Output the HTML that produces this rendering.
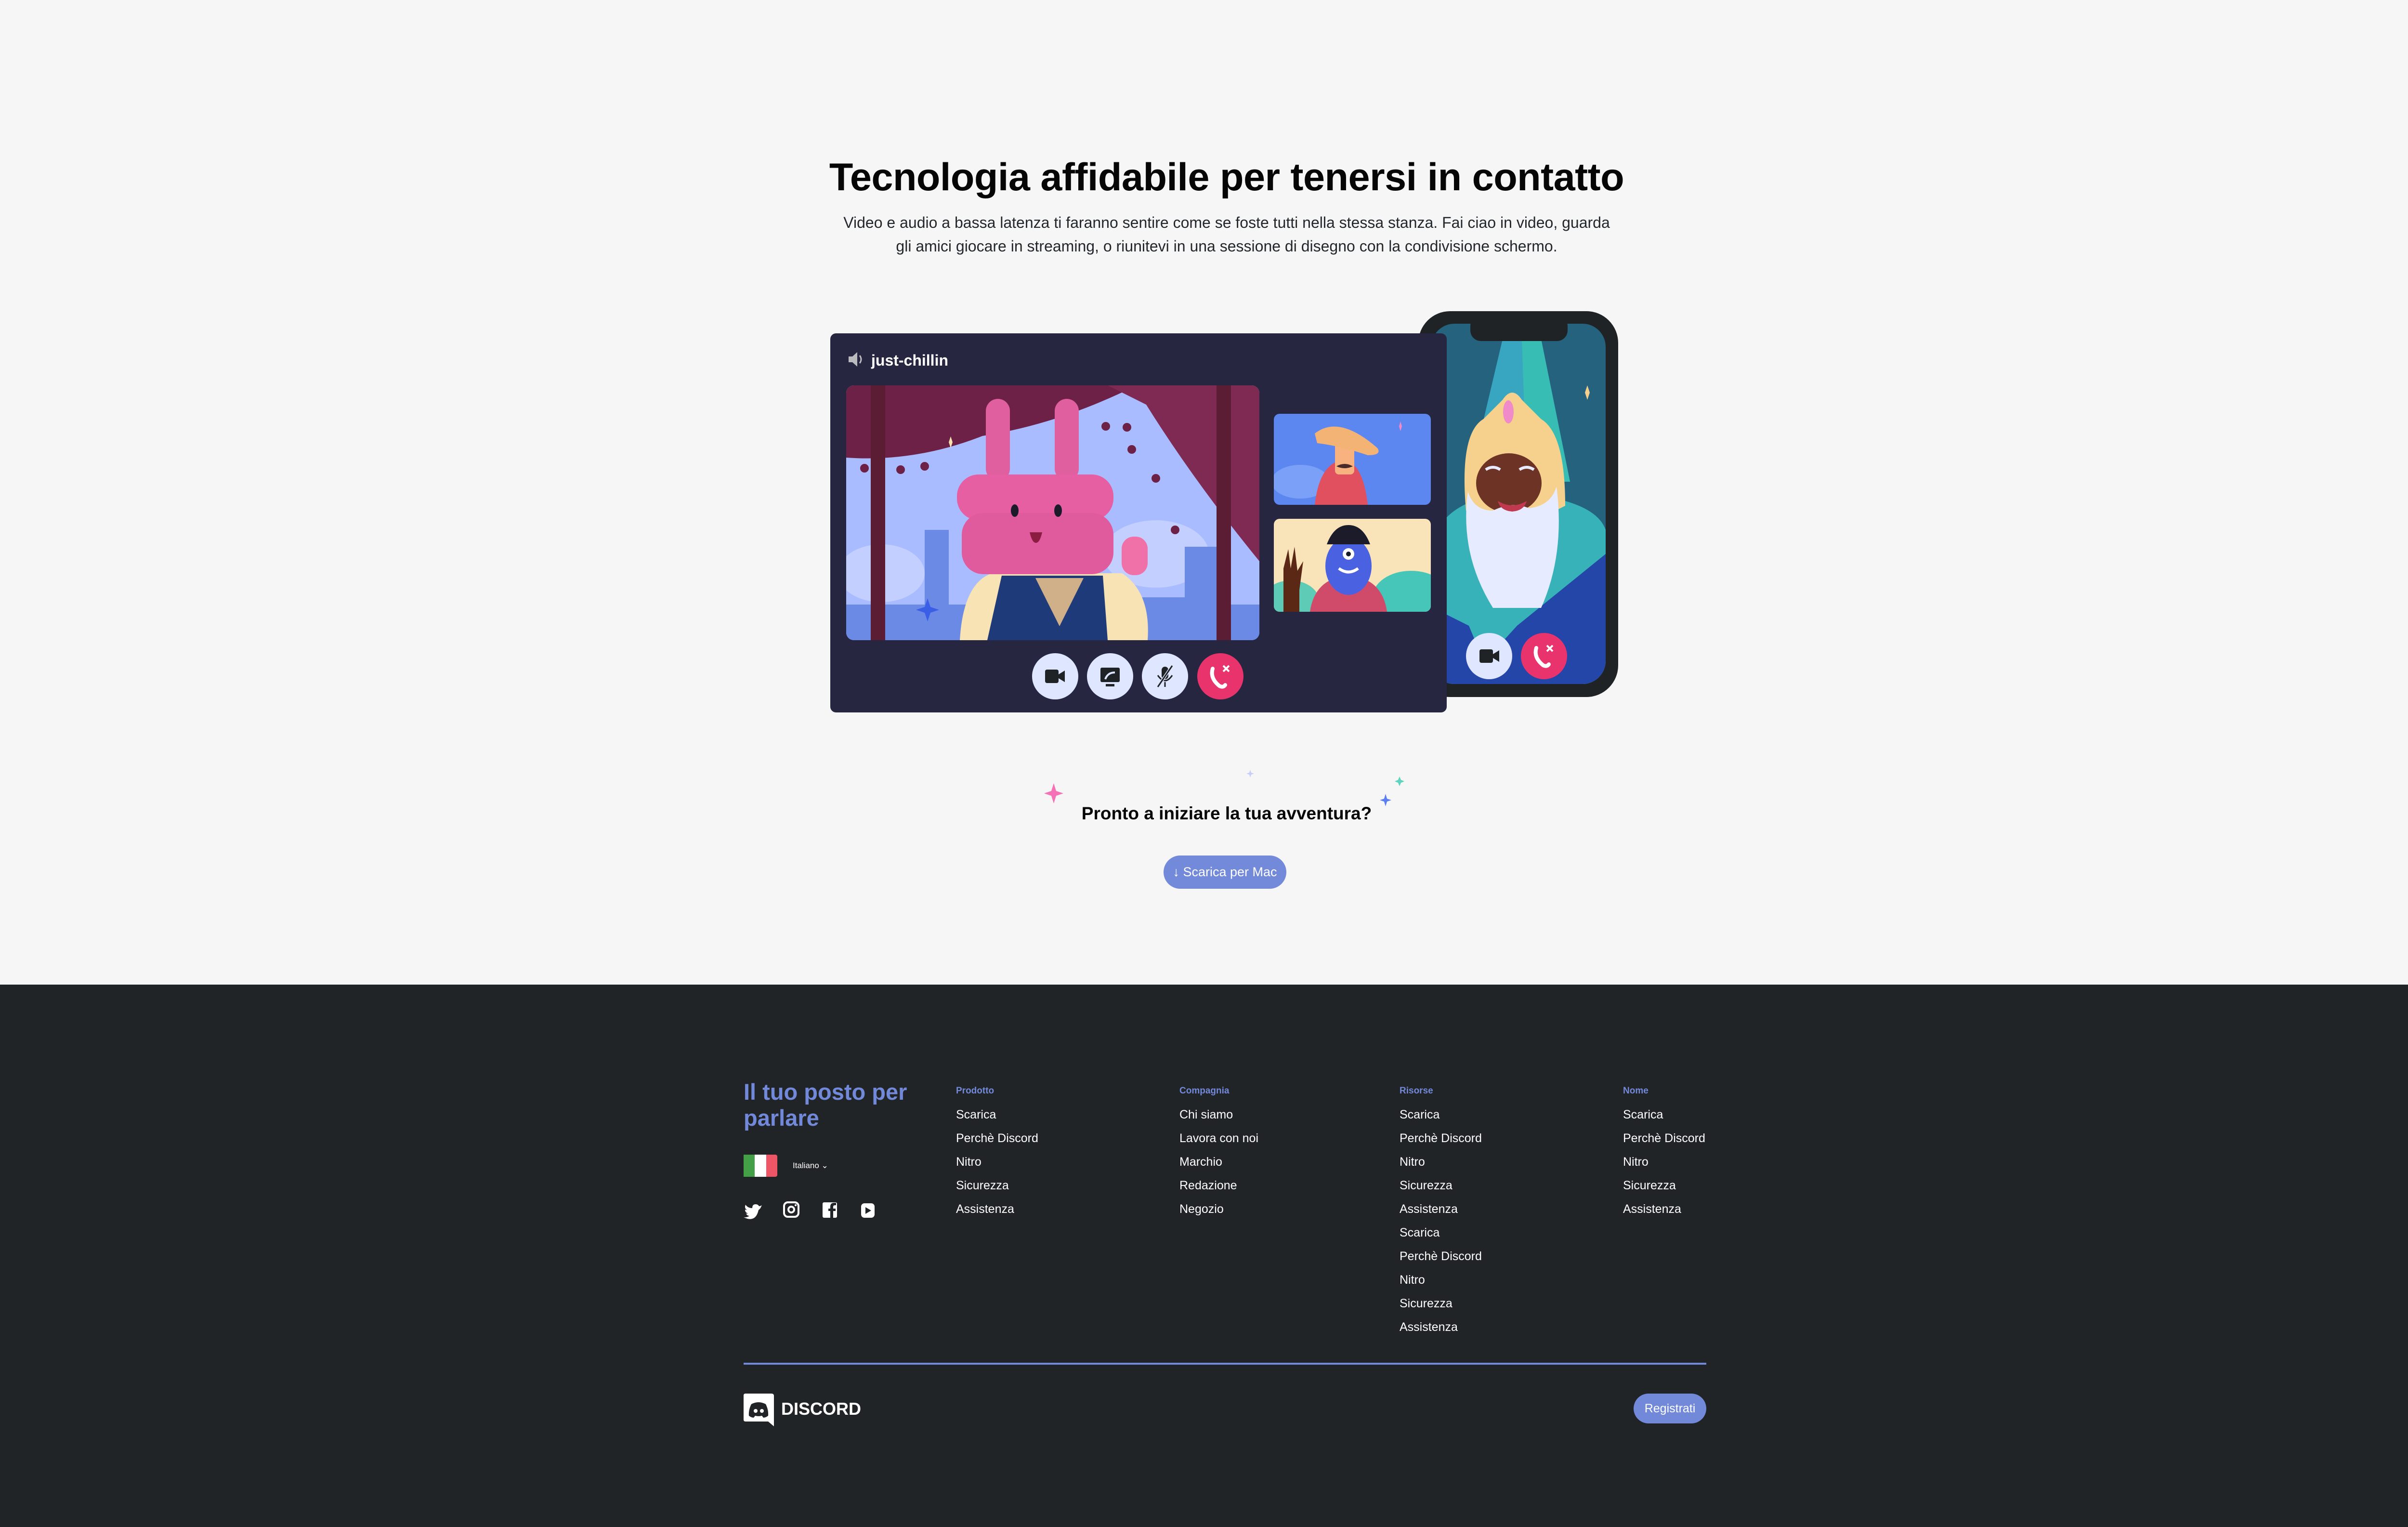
<!DOCTYPE html>
<html><head><meta charset="utf-8"><style>
*{margin:0;padding:0;box-sizing:border-box}
html,body{width:5120px;height:3170px;overflow:hidden}
body{background:#f6f6f6;font-family:"Liberation Sans",Arial,sans-serif;position:relative}
.abs{position:absolute}
h1{position:absolute;left:0;width:5094px;top:322px;text-align:center;font-size:81px;font-weight:bold;color:#060607;letter-spacing:-0.5px}
.sub{position:absolute;left:0;width:5094px;top:438px;text-align:center;font-size:32px;line-height:49px;color:#23262a}
.cta{position:absolute;left:0;width:5094px;top:1668px;text-align:center;font-size:37px;font-weight:bold;color:#060607}
.btn{position:absolute;left:2416px;top:1776px;width:255px;height:69px;border-radius:35px;background:#7389d9;color:#fff;font-size:27px;line-height:69px;text-align:center}
footer{position:absolute;left:0;top:2044px;width:5094px;height:1126px;background:#212427}
.scroll{position:absolute;left:5094px;top:0;width:26px;height:3170px;background:#f1f1f1;border-left:1px solid #e4e4e4}
.thumb{position:absolute;left:5099px;top:2044px;width:14px;height:1126px;background:#8a8a8a;border-radius:7px}
.tag{position:absolute;left:1544px;top:2240px;font-size:47px;line-height:54px;font-weight:bold;color:#7289da}
.col{position:absolute;top:2254px}
.col h4{font-size:19px;color:#7289da;font-weight:bold;height:46px}
.col div{font-size:25px;color:#fff;height:49px}
</style></head><body>
<h1>Tecnologia affidabile per tenersi in contatto</h1>
<div class="sub">Video e audio a bassa latenza ti faranno sentire come se foste tutti nella stessa stanza. Fai ciao in video, guarda<br>gli amici giocare in streaming, o riunitevi in una sessione di disegno con la condivisione schermo.</div>

<svg class="abs" style="left:1700px;top:620px" width="1700" height="880" viewBox="1700 620 1700 880">
<defs>
<clipPath id="mv"><rect x="1757" y="800" width="858" height="529" rx="16"/></clipPath>
<clipPath id="s1"><rect x="2645" y="859" width="326" height="189" rx="12"/></clipPath>
<clipPath id="s2"><rect x="2645" y="1077" width="326" height="193" rx="12"/></clipPath>
<clipPath id="ph"><rect x="2972" y="672" width="362" height="748" rx="48"/></clipPath>
</defs>
<!-- phone -->
<rect x="2945" y="646" width="415" height="801" rx="66" fill="#202326"/>
<g clip-path="url(#ph)">
<rect x="2972" y="672" width="362" height="748" fill="#25627d"/>
<polygon points="3050,1000 3120,704 3200,704 3260,1000" fill="#38a6c0"/>
<polygon points="3160,704 3200,704 3260,1000 3170,1000" fill="#38bdb5"/>
<path d="M2972 1120 Q3000 1060 3060 1040 L3250 1040 Q3320 1060 3334 1100 L3334 1420 L2972 1420Z" fill="#36b2b8"/>
<path d="M3150 1299 L3334 1150 L3334 1420 L3040 1420 Z" fill="#2346a8"/>
<path d="M2972 1260 L3050 1299 L3100 1420 L2972 1420Z" fill="#2346a8"/>
<path d="M3044 1060 Q3030 900 3080 870 L3120 830 Q3140 800 3160 830 L3200 870 Q3250 900 3250 1050 L3230 1060 L3060 1060Z" fill="#f5d18d"/>
<ellipse cx="3133" cy="1003" rx="68" ry="62" fill="#6d3426"/>
<path d="M3048 1020 Q3060 1060 3100 1060 Q3140 1040 3175 1055 Q3220 1050 3232 1010 Q3250 1150 3200 1262 L3100 1262 Q3030 1150 3048 1020Z" fill="#e7ebff"/>
<path d="M3110 1040 q30 18 60 0 q-5 20 -30 22 q-25 -2 -30 -22z" fill="#c0394e"/>
<path d="M3085 975 q15 -10 30 0 M3155 975 q15 -10 30 0" stroke="#e7ebff" stroke-width="6" fill="none"/>
<ellipse cx="3132" cy="855" rx="11" ry="24" fill="#f08ac8"/>
<path d="M3291 815 l5 -15 l5 15 l-5 15z" fill="#f5d18d"/>
<path d="M2990 1045 l4 -10 l4 10 l-4 10z" fill="#f08ac8"/>
</g>
<rect x="3053" y="655" width="202" height="53" rx="22" fill="#202326"/>
<circle cx="3092" cy="1362" r="48" fill="#dfe6ff"/>
<rect x="3072" y="1348" width="28" height="28" rx="4" fill="#202326"/><polygon points="3100,1358 3113,1350 3113,1374 3100,1366" fill="#202326"/>
<circle cx="3206" cy="1362" r="48" fill="#e8336d"/>
<path d="M3190 1345 q-6 20 14 36 q8 4 12 -2" stroke="#fff" stroke-width="8" fill="none" stroke-linecap="round"/>
<path d="M3212 1340 l12 12 M3224 1340 l-12 12" stroke="#fff" stroke-width="4"/>
<!-- window -->
<rect x="1724" y="692" width="1280" height="787" rx="12" fill="#262641"/>
<path d="M1762 740 h8 l10 -9 v30 l-10 -9 h-8z" fill="#b9bbbe"/>
<path d="M1785 738 q6 8 0 16" stroke="#b9bbbe" stroke-width="3" fill="none"/>
<text x="1809" y="759" font-family="Liberation Sans,sans-serif" font-weight="bold" font-size="32" fill="#fff">just-chillin</text>
<g clip-path="url(#mv)">
<rect x="1757" y="800" width="858" height="529" fill="#a9bcff"/>
<ellipse cx="1830" cy="1190" rx="90" ry="60" fill="#c3cffe"/>
<ellipse cx="2400" cy="1150" rx="110" ry="70" fill="#c3cffe"/>
<rect x="1920" y="1100" width="50" height="230" fill="#6a8ae6"/>
<rect x="1757" y="1255" width="858" height="80" fill="#6a8ae6"/>
<rect x="2460" y="1135" width="80" height="200" fill="#6a8ae6"/>
<rect x="2360" y="1240" width="100" height="90" fill="#6a8ae6"/>
<path d="M1757 800 H2360 Q2200 880 2040 905 Q1900 960 1757 950Z" fill="#6d2147"/>
<path d="M2300 800 H2615 V1165 Q2480 1000 2380 840Z" fill="#7e2a52"/>
<g fill="#6d2147"><circle cx="1795" cy="972" r="9"/><circle cx="1870" cy="975" r="9"/><circle cx="1920" cy="968" r="9"/><circle cx="2296" cy="885" r="9"/><circle cx="2340" cy="887" r="9"/><circle cx="2350" cy="933" r="9"/><circle cx="2400" cy="993" r="9"/><circle cx="2440" cy="1100" r="9"/></g>
<rect x="1808" y="800" width="30" height="529" fill="#5b1d33"/>
<rect x="2526" y="800" width="30" height="529" fill="#5b1d33"/>
<path d="M1993 1329 Q2000 1210 2060 1190 L2330 1190 Q2390 1230 2383 1329Z" fill="#f7e3b3"/>
<path d="M2050 1329 L2080 1195 L2290 1195 L2300 1329Z" fill="#1f3a78"/>
<polygon points="2150,1200 2250,1200 2200,1300" fill="#d0b088"/>
<rect x="2329" y="1114" width="54" height="80" rx="25" fill="#f070a8"/>
<rect x="2047" y="828" width="50" height="170" rx="25" fill="#e0609f"/>
<rect x="2190" y="828" width="50" height="170" rx="25" fill="#e0609f"/>
<rect x="1987" y="985" width="325" height="95" rx="45" fill="#e55fa2"/>
<rect x="1997" y="1065" width="315" height="127" rx="45" fill="#e05a9e"/>
<ellipse cx="2107" cy="1060" rx="8" ry="13" fill="#1b1b2a"/><ellipse cx="2197" cy="1060" rx="8" ry="13" fill="#1b1b2a"/>
<path d="M2138 1105 h26 q-5 22 -13 22 q-8 0 -13 -22z" fill="#8b1d40"/>
<path d="M1920 1260 l6 -18 l6 18 l18 6 l-18 6 l-6 18 l-6 -18 l-18 -6z" fill="#3b5ee6"/>
<path d="M1970 918 l4 -12 l4 12 l-4 12z" fill="#f6e2b0"/>
</g>
<g clip-path="url(#s1)">
<rect x="2645" y="859" width="326" height="189" fill="#5c87f1"/>
<ellipse cx="2700" cy="1000" rx="60" ry="35" fill="#7aa0f7"/>
<path d="M2730 1048 Q2740 960 2790 955 Q2830 960 2840 1048Z" fill="#e0505e"/>
<rect x="2772" y="920" width="40" height="65" rx="8" fill="#f8b27f"/>
<path d="M2775 968 q17 -10 34 0 q-17 8 -34 0z" fill="#4b2a2a"/>
<path d="M2730 900 Q2780 860 2860 930 Q2870 945 2840 945 Q2780 925 2735 920Z" fill="#f2b374"/>
<path d="M2905 885 l3 -10 l3 10 l-3 10z" fill="#f08ac8"/>
</g>
<g clip-path="url(#s2)">
<rect x="2645" y="1077" width="326" height="193" fill="#f8e4b8"/>
<ellipse cx="2930" cy="1240" rx="80" ry="55" fill="#45c6b8"/>
<ellipse cx="2680" cy="1250" rx="60" ry="45" fill="#5dcbb5"/>
<path d="M2720 1270 Q2730 1200 2800 1195 Q2870 1200 2880 1270Z" fill="#d04a6a"/>
<ellipse cx="2800" cy="1175" rx="48" ry="60" fill="#4a62e2"/>
<circle cx="2800" cy="1150" r="12" fill="#fff"/><circle cx="2800" cy="1150" r="5" fill="#1b1b2a"/>
<path d="M2780 1180 q20 15 40 0" stroke="#fff" stroke-width="6" fill="none"/>
<path d="M2755 1130 Q2770 1090 2800 1090 Q2830 1090 2845 1130Z" fill="#1b1b2a"/>
<path d="M2665 1270 V1180 l10 -40 l5 40 l8 -45 l6 50 l12 -20 l-8 60 V1270Z" fill="#5b2815"/>
</g>
<g>
<circle cx="2191" cy="1404" r="48" fill="#dfe6ff"/>
<rect x="2170" y="1390" width="28" height="28" rx="4" fill="#202326"/><polygon points="2198,1400 2211,1392 2211,1416 2198,1408" fill="#202326"/>
<circle cx="2305" cy="1404" r="48" fill="#dfe6ff"/>
<rect x="2285" y="1386" width="40" height="30" rx="3" fill="#202326"/><rect x="2296" y="1420" width="18" height="5" fill="#202326"/><path d="M2295 1410 q5 -14 20 -14" stroke="#dfe6ff" stroke-width="4" fill="none"/>
<circle cx="2419" cy="1404" r="48" fill="#dfe6ff"/>
<rect x="2412" y="1384" width="14" height="26" rx="7" fill="#202326"/><path d="M2404 1402 q15 22 30 0 M2419 1416 v10" stroke="#202326" stroke-width="3" fill="none"/><path d="M2404 1426 l30 -44" stroke="#dfe6ff" stroke-width="6"/><path d="M2404 1426 l30 -44" stroke="#202326" stroke-width="3"/>
<circle cx="2534" cy="1404" r="48" fill="#e8336d"/>
<path d="M2518 1388 q-6 20 14 36 q8 4 12 -2" stroke="#fff" stroke-width="8" fill="none" stroke-linecap="round"/>
<path d="M2540 1382 l12 12 M2552 1382 l-12 12" stroke="#fff" stroke-width="4"/>
</g>
</svg>

<svg class="abs" style="left:2150px;top:1590px" width="800" height="100" viewBox="2150 1590 800 100">
<path d="M2188 1626 l5 16 l15 5 l-15 5 l-5 16 l-5 -16 l-15 -5 l15 -5z" fill="#f472b6"/>
<path d="M2596 1598 l2 6 l6 2 l-6 2 l-2 6 l-2 -6 l-6 -2 l6 -2z" fill="#c5cdfa"/>
<path d="M2906 1612 l3 7 l7 3 l-7 3 l-3 7 l-3 -7 l-7 -3 l7 -3z" fill="#5fd3bd"/>
<path d="M2877 1648 l3 10 l9 3 l-9 3 l-3 10 l-3 -10 l-9 -3 l9 -3z" fill="#5b7ff0"/>
</svg>
<div class="cta">Pronto a iniziare la tua avventura?</div>
<div class="btn">↓ Scarica per Mac</div>

<footer></footer>
<div class="tag">Il tuo posto per<br>parlare</div>
<svg class="abs" style="left:1544px;top:2397px" width="70" height="46"><rect width="70" height="46" rx="4" fill="#ee5566"/><rect width="47" height="46" fill="#fff"/><rect width="23" height="46" rx="0" fill="#43a047"/></svg>
<div class="abs" style="left:1646px;top:2410px;font-size:17px;color:#fff">Italiano ⌄</div>
<svg class="abs" style="left:1544px;top:2490px" width="300" height="44" viewBox="0 0 300 44">
<path d="M36 10 q-3 2 -6 2 q-2 -4 -7 -4 q-7 0 -7 8 q-9 0 -14 -7 q-3 7 3 11 q-2 0 -4 -1 q0 6 6 8 q-2 1 -4 0 q2 5 7 5 q-5 4 -12 3 q25 12 31 -15 q4 -3 5 -6z" fill="#fff" transform="translate(2 2)"/>
<rect x="84" y="6" width="30" height="30" rx="8" stroke="#fff" stroke-width="4" fill="none"/><circle cx="99" cy="21" r="6" stroke="#fff" stroke-width="4" fill="none"/><circle cx="108" cy="12" r="2" fill="#fff"/>
<rect x="164" y="6" width="30" height="32" rx="3" fill="#fff"/><path d="M186 38 V24 h5 v-5 h-5 v-4 q0 -3 4 -3 h2 v-5 h-4 q-8 0 -8 8 v4 h-4 v5 h4 v14z" fill="#212427"/>
<rect x="244" y="8" width="28" height="30" rx="7" fill="#fff"/><polygon points="253,16 265,23 253,30" fill="#212427"/>
</svg>
<div class="col" style="left:1985px"><h4>Prodotto</h4><div>Scarica</div><div>Perchè Discord</div><div>Nitro</div><div>Sicurezza</div><div>Assistenza</div></div>
<div class="col" style="left:2449px"><h4>Compagnia</h4><div>Chi siamo</div><div>Lavora con noi</div><div>Marchio</div><div>Redazione</div><div>Negozio</div></div>
<div class="col" style="left:2906px"><h4>Risorse</h4><div>Scarica</div><div>Perchè Discord</div><div>Nitro</div><div>Sicurezza</div><div>Assistenza</div><div>Scarica</div><div>Perchè Discord</div><div>Nitro</div><div>Sicurezza</div><div>Assistenza</div></div>
<div class="col" style="left:3370px"><h4>Nome</h4><div>Scarica</div><div>Perchè Discord</div><div>Nitro</div><div>Sicurezza</div><div>Assistenza</div></div>
<div class="abs" style="left:1544px;top:2829px;width:1999px;height:4px;background:#7289da"></div>
<svg class="abs" style="left:1544px;top:2893px" width="70" height="70" viewBox="0 0 70 70">
<path d="M4 0 h54 q5 0 5 5 v63 l-12 -10 h-47 q-4 0 -4 -4 v-50 q0 -4 4 -4z" fill="#fff"/>
<path d="M16 22 q15 -8 30 0 q6 12 5 24 q-5 4 -10 4 l-3 -4 q-7 2 -14 0 l-3 4 q-5 0 -10 -4 q-1 -12 5 -24z" fill="#212427"/>
<circle cx="25" cy="36" r="4" fill="#fff"/><circle cx="38" cy="36" r="4" fill="#fff"/>
</svg>
<div class="abs" style="left:1622px;top:2904px;font-size:36px;font-weight:bold;color:#fff;letter-spacing:0px">DISCORD</div>
<div class="abs" style="left:3392px;top:2893px;width:151px;height:62px;border-radius:31px;background:#7289da;color:#fff;font-size:25px;line-height:62px;text-align:center">Registrati</div>
<div class="scroll"></div><div class="thumb"></div>
</body></html>
